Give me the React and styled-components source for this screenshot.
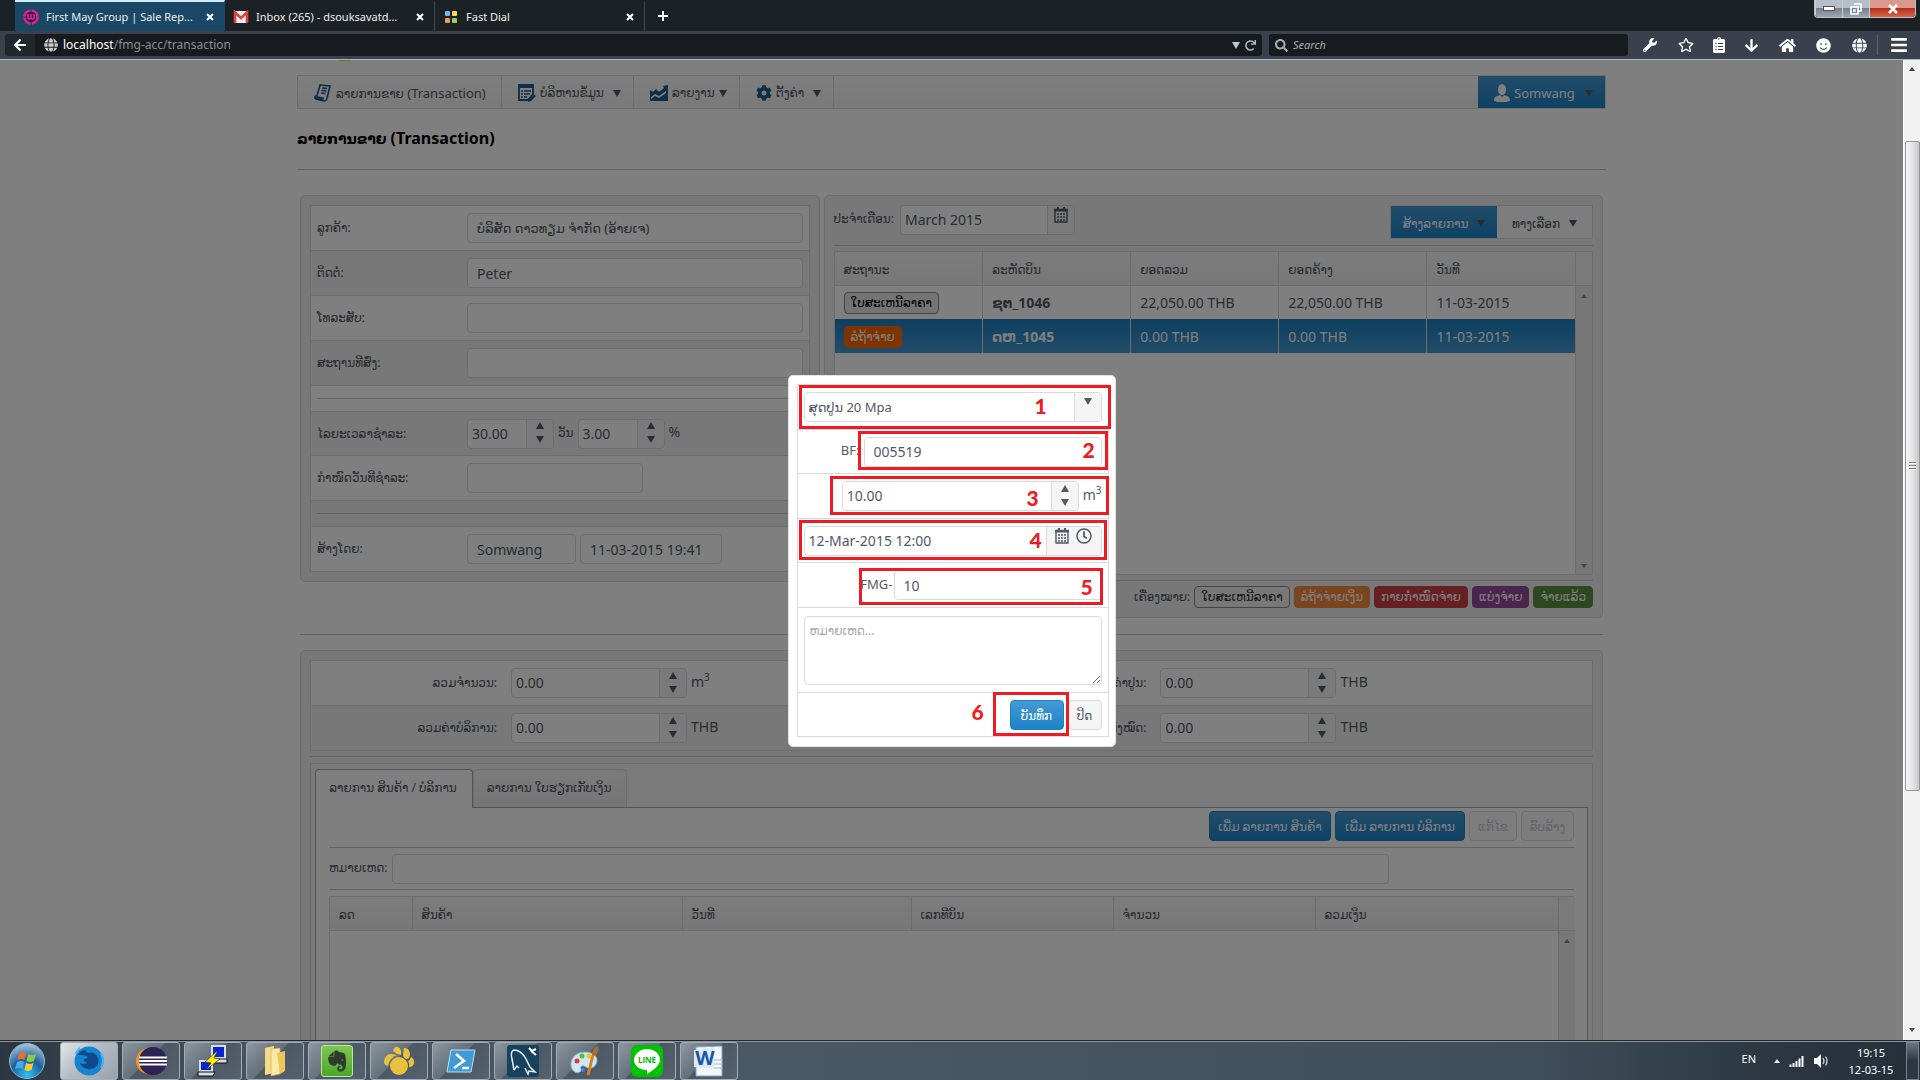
import React from "react";
import styled, { createGlobalStyle, css } from "styled-components";
import {
  FaWrench, FaRegStar, FaClipboardList, FaArrowDown, FaArrowLeft, FaHome, FaGlobe, FaBars,
  FaSmile, FaSearch, FaRedo, FaRegClock, FaCog, FaEvernote,
} from "react-icons/fa";

const sans = `"Noto Sans", "DejaVu Sans", sans-serif`;
const line = "#dadada";
const ink = "#515967";
const blueDown = "linear-gradient(#4499d4, #1c84c8)";
const blueUp = "linear-gradient(#1a7fc0, #449ad2)";

const Global = createGlobalStyle`
  * { box-sizing: border-box; }
  body { margin: 0; background: #fff; font: 14px/20px ${sans}; color: ${ink}; }
  button, input, select, textarea { font: inherit; color: inherit; margin: 0; }
  ul { list-style: none; margin: 0; padding: 0; }
  a { color: inherit; text-decoration: none; }
`;

const Screen = styled.div`
  height: 100vh;
  display: grid;
  grid-template-rows: 31px 29px minmax(0, 1fr) 40px;
  overflow: hidden;
`;

/* ---------- browser window ---------- */
const TabBar = styled.div`
  display: flex;
  padding-left: 15px;
  background: #1c2125;
  color: #eee;
  font: 11px/16px "Noto Sans", sans-serif;
`;
const BrowserTab = styled.div`
  width: 210px;
  display: flex;
  align-items: center;
  gap: 7px;
  padding: 0 10px 0 8px;
  border-top: 2px solid ${(p) => (p.$on ? "#cfeaff" : "transparent")};
  background: ${(p) => (p.$on ? "#1a4766" : "transparent")};
  border-right: 1px solid ${(p) => (p.$on ? "#1a4766" : "#42474b")};
  span { flex: 1; white-space: nowrap; }
`;
const BareButton = styled.button`
  display: flex;
  align-items: center;
  justify-content: center;
  padding: 0;
  border: 0;
  background: none;
  color: inherit;
`;
const NewTab = styled(BareButton)`
  width: 36px;
`;
const WindowButtons = styled.div`
  display: flex;
  height: 18px;
  margin: 0 4px 0 auto;
  border: 1px solid #b9c3cd;
  border-top: 0;
  border-radius: 0 0 4px 4px;
  overflow: hidden;
`;
const WindowButton = styled(BareButton)`
  width: ${(p) => (p.$close ? 46 : 27)}px;
  border-left: 1px solid #c6ced6;
  background: ${(p) => p.$close
    ? "linear-gradient(#d99a8e 0 45%, #b5301a 50%, #d8654a)"
    : "linear-gradient(#b6bec8 0 45%, #76838f 50%, #9aa7b3)"};
`;
const NavBar = styled.div`
  display: flex;
  align-items: center;
  padding-left: 5px;
  background: #3a414d;
  border-bottom: 1px solid #a6b8ca;
  color: #fff;
`;
const BackButton = styled(BareButton)`
  width: 30px;
  height: 22px;
  background: #22272d;
  border-radius: 3px 0 0 3px;
`;
const Field = styled.label`
  display: flex;
  align-items: center;
  gap: 5px;
  height: 22px;
  padding: 0 6px;
  background: #171b1f;
  border-radius: ${(p) => (p.$search ? "3px" : "0 3px 3px 0")};
  font-size: 12px;
  ${(p) => p.$search ? css`width: 359px; margin-left: 7px; color: #aaa; font-style: italic;` : css`flex: 1; padding-left: 9px;`}
`;
const Address = styled.a`
  flex: 1;
  font-size: 12px;
  color: #8b8f93;
  b { color: #fff; font-weight: 400; }
`;
const SearchInput = styled.input`
  flex: 1;
  border: 0;
  padding: 0;
  background: none;
  font-size: 11px;
  font-style: italic;
  &::placeholder { color: #aaa; opacity: 1; }
`;
const Tools = styled.div`
  display: flex;
  align-items: center;
  padding-left: 4px;
`;
const Tool = styled(BareButton)`
  width: ${(p) => p.$w || 36}px;
  height: 22px;
`;
const ToolLine = styled.i`
  width: 1px;
  height: 20px;
  background: #5c636e;
`;

const Viewport = styled.div`
  display: flex;
  min-height: 0;
`;
const Page = styled.main`
  position: relative;
  flex: 1;
  overflow: hidden;
`;
const Column = styled.div`
  max-width: 1309px;
  margin: 0 auto;
`;
const LogoEdge = styled.div`
  height: 15px;
  padding-left: 42px;
  &::before {
    content: "";
    display: block;
    width: 12px;
    height: 1px;
    background: #e6dc20;
  }
`;
const ScrollTrack = styled.div`
  width: 17px;
  display: flex;
  flex-direction: column;
  align-items: center;
  padding: 7px 0 8px;
  background: #f1f1f1;
  border-left: 1px solid #fff;
`;
const ScrollThumb = styled.div`
  width: 15px;
  height: 650px;
  margin: 70px 0 auto;
  display: flex;
  flex-direction: column;
  align-items: center;
  justify-content: center;
  gap: 1px;
  border: 1px solid #979797;
  border-radius: 2px;
  background: linear-gradient(90deg, #f5f5f5, #e4e4e6 50%, #c9c9cd);
  i { width: 7px; height: 2px; background: #777; border-bottom: 1px solid #fff; }
`;

/* ---------- page parts ---------- */
const Lao = styled.span`
  font-size: 12px;
`;
const MenuBar = styled.nav`
  display: flex;
  height: 34px;
  border: 1px solid ${line};
  background: linear-gradient(#fdfdfd, #f3f3f4);
`;
const MenuItem = styled.a`
  width: ${(p) => p.$w}px;
  display: flex;
  align-items: center;
  gap: 4px;
  padding: 2px 12px 0 16px;
  font-size: 13px;
  white-space: nowrap;
  border-right: 1px solid ${line};
  ${(p) => p.$user && css`
    margin-left: auto;
    border: 0;
    color: #fff;
    background: ${blueDown};
  `}
  svg:first-child { flex: none; }
`;
const Caret = styled.i`
  width: 0;
  margin-left: ${(p) => (p.$push ? "auto" : "0")};
  border: ${(p) => (p.$small ? 3 : 4)}px solid transparent;
  border-top: ${(p) => (p.$small ? 4 : 7)}px solid ${(p) => (p.$c || ink)};
  border-bottom: 0;
`;
const CaretUp = styled(Caret)`
  border-top: 0;
  border-bottom: ${(p) => (p.$small ? 4 : 7)}px solid ${(p) => (p.$c || ink)};
`;
const Heading = styled.h1`
  height: 60px;
  margin: 0;
  font-size: 16px;
  line-height: 58px;
  color: #000;
  small { font-size: 14px; }
`;
const Rule = styled.hr`
  height: 1px;
  margin: ${(p) => p.$m || "0"};
  border: 0;
  background: #c6c6c8;
`;
const Panels = styled.div`
  display: grid;
  grid-template-columns: minmax(0, 2fr) minmax(0, 3fr);
  gap: 4px;
  align-items: start;
  margin: 25px 3px 0;
`;
const Panel = styled.section`
  padding: 9px;
  border: 1px solid ${line};
  border-radius: 5px;
  background: #f1f1f2;
`;
const FormTable = styled.div`
  border: 1px solid ${line};
  border-bottom: 0;
  background: #fff;
`;
const FormRow = styled.div`
  display: flex;
  align-items: center;
  gap: ${(p) => (p.$tight ? 1 : 4)}px;
  height: ${(p) => p.$h || 45}px;
  padding: 0 6px;
  border-bottom: 1px solid ${line};
  background: ${(p) => (p.$alt ? "#f1f1f2" : "transparent")};
  justify-content: ${(p) => (p.$end ? "flex-end" : "flex-start")};
  hr { flex: 1; }
`;
const Label = styled.label`
  width: 146px;
  flex: none;
  font-size: 12px;
  white-space: nowrap;
`;
const box = css`
  height: 30px;
  border: 1px solid ${line};
  border-radius: 4px;
  background: #fff;
`;
const TextInput = styled.input`
  ${box}
  min-width: 0;
  padding: 0 9px;
  font-size: ${(p) => (p.$lao ? 13 : 14)}px;
  ${(p) => (p.$w ? `width: ${p.$w}px;` : "flex: 1;")}
`;
const Group = styled.span`
  ${box}
  display: flex;
  overflow: hidden;
  ${(p) => (p.$w ? `width: ${p.$w}px;` : "flex: 1;")}
  input, select {
    flex: 1;
    min-width: 0;
    padding: 0 4px;
    border: 0;
    background: none;
    appearance: none;
    outline: 0;
  }
  select { font-size: 13px; }
`;
const Side = styled.span`
  width: ${(p) => p.$w || 27}px;
  flex: none;
  display: flex;
  flex-direction: ${(p) => (p.$row ? "row" : "column")};
  align-items: center;
  justify-content: ${(p) => (p.$top ? "flex-start" : "center")};
  gap: 7px;
  padding: ${(p) => (p.$top ? "5px 0 0" : p.$row ? "0 0 10px" : "0 0 2px")};
  border-left: 1px solid ${line};
  background: #f5f5f6;
  button { height: auto; }
`;
const Unit = styled.span`
  padding-bottom: 3px;
  sup { font-size: 10px; line-height: 0; }
`;
const Prefix = styled.label`
  padding-bottom: 3px;
  font-size: 13px;
`;
const Bar = styled.div`
  display: flex;
  gap: ${(p) => (p.$wide ? 6 : 4)}px;
  align-items: flex-start;
  justify-content: ${(p) => (p.$end ? "flex-end" : "flex-start")};
`;
const BarLabel = styled.label`
  font-size: 12px;
  line-height: ${(p) => p.$lh || 28}px;
  white-space: nowrap;
`;
const DropButtons = styled.div`
  display: flex;
  height: 34px;
  margin-left: auto;
  border: 1px solid ${line};
`;
const DropButton = styled(BareButton)`
  width: ${(p) => p.$w}px;
  gap: 9px;
  padding-top: 3px;
  font-size: 12px;
  background: ${(p) => (p.$primary ? blueDown : "#fafafa")};
  color: ${(p) => (p.$primary ? "#fff" : ink)};
`;
const GridBox = styled.div`
  display: flex;
  height: ${(p) => p.$h}px;
  border: 1px solid ${line};
  background: #fff;
`;
const DataTable = styled.table`
  flex: 1;
  align-self: flex-start;
  width: 100%;
  border-collapse: collapse;
  table-layout: fixed;
  th, td { padding: 0 9px; text-align: left; white-space: nowrap; border-left: 1px solid ${line}; }
  th:first-child, td:first-child { border-left: 0; }
  th { height: 33px; padding-top: 3px; font-size: 12px; font-weight: 400; background: linear-gradient(#f8f8f8, #f0f0f1); border-bottom: 1px solid ${line}; }
  td { height: 34px; padding-top: 2px; }
`;
const Tr = styled.tr`
  ${(p) => p.$on && css`color: #fff; background: ${blueUp};`}
`;
const MiniScroll = styled.div`
  width: 17px;
  flex: none;
  display: flex;
  flex-direction: column;
  align-items: center;
  padding-bottom: 6px;
  background: #eee;
  border-left: 1px solid ${line};
  &::before {
    content: "";
    align-self: stretch;
    height: 33px;
    margin-bottom: 8px;
    background: #f4f4f5;
    border-bottom: 1px solid ${line};
  }
  i:last-child { margin-top: auto; }
`;
const Tag = styled.span`
  display: inline-block;
  padding: 0 6px;
  border: 1px solid ${(p) => p.$line || p.$bg};
  border-radius: 4px;
  font-size: 12px;
  line-height: 20px;
  color: ${(p) => p.$c || "#fff"};
  background: ${(p) => p.$bg};
  white-space: nowrap;
`;
const Totals = styled.div`
  display: grid;
  grid-template-columns: minmax(0, 650fr) minmax(0, 632fr);
  height: 45px;
  align-items: center;
  border-bottom: 1px solid ${line};
  background: ${(p) => (p.$alt ? "#f1f1f2" : "transparent")};
`;
const TotalCell = styled.div`
  display: flex;
  align-items: center;
  gap: 4px;
`;
const TotalLabel = styled(Label)`
  width: 186px;
  margin-right: 10px;
  text-align: right;
`;
const TabBox = styled.div`
  height: 420px;
  padding: 5px 4px 0;
  border: 1px solid ${line};
  background: #f4f4f5;
`;
const Tabs = styled.div`
  display: flex;
`;
const Tab = styled.button`
  width: ${(p) => p.$w}px;
  height: 38px;
  padding: 0 2px 2px 0;
  font-size: 12px;
  white-space: nowrap;
  border: 1px solid ${line};
  border-bottom: 0;
  border-radius: 4px 4px 0 0;
  background: linear-gradient(#f6f6f6, #ececee);
  ${(p) => p.$on && css`
    position: relative;
    border: 1px solid #a5a8b5;
    border-bottom: 0;
    background: #fff;
    height: 39px;
    margin-bottom: -1px;
  `}
`;
const TabPane = styled.div`
  height: 380px;
  padding: 3px 13px 0;
  border: 1px solid #a5a8b5;
  background: #fff;
`;
const Button = styled.button`
  width: ${(p) => p.$w}px;
  height: 30px;
  padding: 2px 0 0;
  border: 1px solid ${(p) => (p.$primary ? "#1984c8" : line)};
  border-radius: 4px;
  font-size: 12px;
  white-space: nowrap;
  color: ${(p) => (p.$primary ? "#fff" : ink)};
  background: ${(p) => (p.$primary ? blueDown : "#f5f5f5")};
  &:disabled { color: #c9c9cf; background: #fbfbfb; }
`;
const BottomWrap = styled(Panel)`
  margin: 0 3px;
`;

/* ---------- dialog ---------- */
const Overlay = styled.div`
  position: absolute;
  inset: 0;
  z-index: 2;
  display: flex;
  justify-content: center;
  align-items: flex-start;
  padding-top: 315px;
  background: rgba(0, 0, 0, 0.5);
`;
const Dialog = styled.form`
  position: relative;
  width: 328px;
  padding: 8px 6px 9px 8px;
  border: 1px solid #e4e4e8;
  border-radius: 5px;
  background: #fff;
`;
const Note = styled.textarea`
  flex: 1;
  height: 69px;
  padding: 4px 5px;
  border: 1px solid ${line};
  border-radius: 4px;
  font-size: 12px;
  &::placeholder { color: #a5a7ad; opacity: 1; }
`;
const Mark = styled.div`
  position: absolute;
  pointer-events: none;
  left: ${(p) => p.$x}px;
  top: ${(p) => p.$y}px;
  width: ${(p) => p.$w}px;
  height: ${(p) => p.$h}px;
  border: 3px solid #ed1c24;
`;
const MarkNumber = styled.b`
  position: absolute;
  pointer-events: none;
  left: ${(p) => p.$x}px;
  top: ${(p) => p.$y}px;
  width: 12px;
  font: 900 21px/22px Lato, sans-serif;
  text-align: center;
  color: #ed1c24;
`;

/* ---------- taskbar ---------- */
const TaskBar = styled.footer`
  display: flex;
  align-items: center;
  padding: 0 1px 0 7px;
  border-top: 1px solid #20262c;
  box-shadow: inset 0 1px 0 #8a949e;
  background: linear-gradient(90deg, #2b3641, #45535f 12%, #4a5966 40%, #3f4e5b 80%, #2c3742 92%, #252f39);
  color: #fff;
`;
const Orb = styled(BareButton)`
  width: 40px;
  margin-right: 13px;
`;
const Apps = styled.div`
  display: flex;
  gap: 4px;
`;
const AppButton = styled(BareButton)`
  width: 58px;
  height: 38px;
  border: 1px solid #a3adb5;
  border-radius: 3px;
  background: ${(p) => p.$on
    ? "linear-gradient(135deg, #e3e6e8, #b4bcc3 45%, #98a2ab)"
    : "linear-gradient(135deg, #8d979f, #64707a 45%, #4c5863 46%, #55626d)"};
`;
const Tray = styled.div`
  display: flex;
  align-items: center;
  gap: 9px;
  margin-left: auto;
  font: 12px/17px "Noto Sans", sans-serif;
`;
const Lang = styled.span`
  padding: 0 9px 4px 0;
  font-size: 11px;
`;
const Clock = styled.div`
  width: 64px;
  font-size: 11px;
  text-align: center;
`;
const Peek = styled(BareButton)`
  width: 13px;
  height: 38px;
  margin-left: 3px;
  border: 1px solid #77828c;
  background: linear-gradient(#6b757e, #2c3640 50%);
`;

/* ---------- drawings ---------- */
const Close = () => (
  <svg width="8" height="8" viewBox="0 0 8 8"><path d="M1 1l6 6M7 1L1 7" stroke="#fff" strokeWidth="2" /></svg>
);
const Calendar = () => (
  <svg width="14" height="16" viewBox="0 0 14 16">
    <path d="M1 2.500h12v12.500H1z" fill="none" stroke="#515967" strokeWidth="1.400" />
    <path d="M0 2h14v2.500H0zM3 0h2v3H3zM9 0h2v3H9z" fill="#515967" />
    <path d="M3 7h8M3 10h8M3 13h8" stroke="#515967" strokeWidth="1.600" strokeDasharray="2 1" />
  </svg>
);
const Scroll = () => (
  <svg width="18" height="18" viewBox="0 0 18 18">
    <path d="M6 1l10 1-3 12c0 2-2 3-3 3L2 15c-2-1-1-3 0-3h1z" fill="#fff" stroke="#1c5a8c" strokeWidth="1.600" />
    <path d="M2 12l8 1.500L9 17l-7-1.500q-1.500-2 0-3.500z" fill="#1c5a8c" />
    <path d="M8 4l5 .5M7.500 6.500l5 .5M7 9l4.500.5" stroke="#1c5a8c" strokeWidth="1.400" fill="none" />
  </svg>
);
const Register = () => (
  <svg width="18" height="18" viewBox="0 0 18 18">
    <path d="M1 1h14v9l-5 6H1z" fill="#fff" stroke="#1c5a8c" strokeWidth="1.800" />
    <path d="M1 2.500h14" stroke="#1c5a8c" strokeWidth="3" />
    <path d="M3 7h2M6 7h7M3 10h2M6 10h6M3 13h2M6 13h3" stroke="#1c5a8c" strokeWidth="1.300" />
    <path d="M10 16l5-6 3 2-5 5-3 1z" fill="#1c5a8c" />
  </svg>
);
const Chart = () => (
  <svg width="18" height="18" viewBox="0 0 18 18">
    <path d="M0 17V6l3 2 3-3 3 3 5-4-1-2 5-1v16z" fill="#1c5a8c" />
    <path d="M1 13l4-3 4 2 7-5v2l-7 5-4-2-4 3z" fill="#fff" />
  </svg>
);
const Person = () => (
  <svg width="16" height="18" viewBox="0 0 16 18">
    <ellipse cx="8" cy="5.500" rx="4" ry="5.500" fill="#fff" />
    <path d="M0 16c0-3 3-4 6-5l2 2 2-2c3 1 6 2 6 5 0 3-16 3-16 0z" fill="#fff" />
  </svg>
);
const Fav = ({ kind }) => (
  <svg width="16" height="16" viewBox="0 0 16 16">
    {kind === "fmg" && <>
      <circle cx="8" cy="8" r="6.500" fill="#2b2350" stroke="#e5218c" strokeWidth="2.600" strokeDasharray="9 1.200" />
      <path d="M5 5v4q1.500 2 3 0q1.500 2 3 0V5M8 5v4" stroke="#e5218c" strokeWidth="1.600" fill="none" />
    </>}
    {kind === "mail" && <>
      <path d="M1 2h14v12H1z" fill="#eee" />
      <path d="M2 14V3.500l6 5.500 6-5.500V14" stroke="#db4437" strokeWidth="2.600" fill="none" />
    </>}
    {kind === "dial" && <>
      <rect x="2" y="2" width="5" height="5" rx="1" fill="#72b8e8" /><rect x="9" y="2" width="5" height="5" rx="1" fill="#f7d94c" />
      <rect x="2" y="9" width="5" height="5" rx="1" fill="#f3984a" /><rect x="9" y="9" width="5" height="5" rx="1" fill="#9bc866" />
    </>}
  </svg>
);
const Flag = () => (
  <svg width="38" height="38" viewBox="0 0 38 38">
    <defs><radialGradient id="orb" cx=".5" cy=".9" r=".9"><stop offset="0" stopColor="#2fc4f5" /><stop offset=".5" stopColor="#1b5f9c" /><stop offset="1" stopColor="#a9c6dc" /></radialGradient></defs>
    <circle cx="19" cy="19" r="17.500" fill="url(#orb)" stroke="#8fb4cc" />
    <path d="M11 12q4-3 7-1l-1.500 7q-3-2-7 0z" fill="#f26a2c" /><path d="M20 12q4 2 8 0l-2 7q-4 2-7.500 0z" fill="#8ccc3c" />
    <path d="M9 20q4-2 7 0l-1.500 7q-3-2-7.500 0z" fill="#4ba8e8" /><path d="M18 21q4 2 7.500 0l-2 7q-3.500 2-7 0z" fill="#fcc92e" />
  </svg>
);
const art = {
  Firefox: <>
    <circle cx="16" cy="16" r="14.500" fill="#1583d0" />
    <path d="M5 10q2-5 8-5-1 2 2 3 6-2 9 3 3 5 0 10-4 4-9 3-7-1-8-6 4 2 7 0-4-2-3-4 3 0 4-2-3-2-6-2-2 0-4 0z" fill="#0d4a8c" />
    <path d="M28 8q4 8 0 15M3 9q1-4 4-6" stroke="#44b4f2" strokeWidth="2" fill="none" />
  </>,
  Eclipse: <>
    <circle cx="14" cy="16" r="13" fill="#f7941e" /><circle cx="18" cy="16" r="14" fill="#2c2255" />
    <path d="M4 12.500h28M4 16h28M4 19.500h28" stroke="#fff" strokeWidth="1.800" />
  </>,
  PuTTY: <>
    <path d="M15 1h13v12H15zM3 16h12v10H3z" fill="#0a22d8" stroke="#ddd" strokeWidth="2" />
    <path d="M14 14h16v4H16zM1 27h17l-2 4H1z" fill="#ddd" stroke="#111" />
    <path d="M21 5L8 17l6 1-5 7 14-11-6-1z" fill="#ffec1a" stroke="#222" strokeWidth=".6" />
  </>,
  Folders: <>
    <path d="M6 3l9-2v27l-9 2z" fill="#f6dc84" /><path d="M12 4l9-1v26l-9 2z" fill="#fbe9a8" stroke="#cfa84a" strokeWidth=".6" /><path d="M18 8l8-2v20l-5 3z" fill="#ecc65c" />
  </>,
  Paint: <>
    <path d="M16 7C6 7 1 14 2 21c1 6 6 8 9 6s-1-5 2-6 5 4 10 2c8-4 7-16-7-16z" fill="#cfe6f5" stroke="#7fa8c4" />
    <circle cx="8" cy="16" r="2.500" fill="#e33" /><circle cx="13" cy="11" r="2.500" fill="#5b3" /><circle cx="20" cy="11" r="2.500" fill="#f5c21c" /><circle cx="14" cy="25" r="2" fill="#38d" />
    <path d="M19 30l5-20" stroke="#d88020" strokeWidth="3" /><path d="M23 10q0-7 6-9 2 5-3 10z" fill="#a86a3c" />
  </>,
  Bear: <>
    <circle cx="16" cy="21" r="9" fill="#e9c13c" />
    <path d="M1 17Q2 9 8 9l6 1q-8 3-9 11-4-1-4-4zM10 6q1-5 5-4 4 2 3 8-5-1-8-4zM21 3q5-1 6 6 0 4-3 5-4-1-4-4zM28 12q4 2 3 7-2 4-5 3 1-3-1-6 2-1 3-4z" fill="#e9c13c" />
  </>,
  PowerShell: <>
    <path d="M6 5h24l-4 22H2z" fill="#3f9ad6" stroke="#bde0f5" /><path d="M11 9l8 7-10 7M17 23h7" stroke="#fff" strokeWidth="2.600" fill="none" />
  </>,
  MySQL: <>
    <rect width="32" height="32" rx="3" fill="#14425f" />
    <path d="M7 25q-1-6-2-11-2-8 2-9 7 0 12 9l4 8 5 5-6-1-1 3-3-6" stroke="#e5edf2" strokeWidth="1.500" fill="none" />
    <path d="M7 25l3-4 2 2" stroke="#e5edf2" strokeWidth="1.300" fill="none" />
    <path d="M22 3l3 3 4-2M24 6l5 4" stroke="#fff" strokeWidth="2" fill="none" />
  </>,
};
const AppIcon = ({ name }) => <svg width="32" height="32" viewBox="0 0 32 32">{art[name]}</svg>;
const Evernote = styled.span`
  display: flex;
  padding: 3px;
  border-radius: 3px;
  border: 1px solid #b6e89a;
  color: #2f3a33;
  background: linear-gradient(#7cc94e, #4ba62a);
`;
const LineIcon = () => (
  <svg width="32" height="32" viewBox="0 0 32 32">
    <rect width="32" height="32" rx="6" fill="#00c300" />
    <path d="M16 4c8 0 13 5 13 11 0 5-5 9-13 14v-4C8 25 3 20 3 15S8 4 16 4z" fill="#fff" />
    <text x="16" y="18" textAnchor="middle" fontFamily="Open Sans, sans-serif" fontWeight="700" fontSize="8" fill="#00b900">LINE</text>
  </svg>
);
const WordIcon = () => (
  <svg width="32" height="32" viewBox="0 0 32 32">
    <path d="M3 2l26-1v30H3z" fill="#f4f8fc" stroke="#7fa3d4" /><path d="M19 15h11M20 19h10M21 23h9" stroke="#9db4cf" />
    <path d="M1 5l20-3v22L1 22z" fill="#dfeaf8" />
    <text x="12" y="20" textAnchor="middle" fontFamily="Open Sans, sans-serif" fontWeight="700" fontSize="20" fill="#1a55a8">W</text>
  </svg>
);
const Signal = () => (
  <svg width="16" height="12" viewBox="0 0 16 12"><path d="M1.500 12V9.500M4.500 12V8M7.500 12V6M10.500 12V3.500M13.500 12V1" stroke="#fff" strokeWidth="2" /></svg>
);
const Speaker = () => (
  <svg width="16" height="14" viewBox="0 0 16 14"><path d="M0 4h3l4-4v14l-4-4H0z" fill="#fff" /><path d="M9 4q2 3 0 6M11.500 2.500q3 4.500 0 9" stroke="#cdd3d8" strokeWidth="1.300" fill="none" /></svg>
);

const Spin = ({ id, value, w, label }) => (
  <Group $w={w}>
    <input id={id} aria-label={label} defaultValue={value} />
    <Side>
      <BareButton type="button" aria-label="+"><CaretUp /></BareButton>
      <BareButton type="button" aria-label="-"><Caret /></BareButton>
    </Side>
  </Group>
);
const ScrollEnds = () => (
  <MiniScroll><CaretUp $small $c="#888" /><Caret $small $c="#888" /></MiniScroll>
);

const bills = [
  { tag: "ໃບສະເຫນີລາຄາ", plain: true, code: "ຊຕ_1046", sum: "22,050.00 THB", due: "22,050.00 THB", date: "11-03-2015" },
  { tag: "ລໍຖ້າຈ່າຍ", code: "ດຫ_1045", sum: "0.00 THB", due: "0.00 THB", date: "11-03-2015", on: true },
];
const legend = [["ລໍຖ້າຈ່າຍເງິນ", "#f58a3c"], ["ກາຍກໍາໜົດຈ່າຍ", "#cc3f44"], ["ແບ່ງຈ່າຍ", "#964b9c"], ["ຈ່າຍແລ້ວ", "#5a8f3c"]];
const totals = [
  [["sumQty", "ລວມຈໍານວນ:", <>m<sup>3</sup></>], ["sumCement", "ລວມຄ່າປູນ:", "THB"]],
  [["sumService", "ລວມຄ່າບໍລິການ:", "THB"], ["sumAll", "ລວມທັງໝົດ:", "THB"]],
];
const itemColumns = [["ລດ", 82], ["ສິນຄ້າ", 270], ["ວັນທີ", 229], ["ເລກທີບິນ", 202], ["ຈໍານວນ", 202], ["ລວມເງິນ", 243]];
const marks = [[10, 9, 312, 44], [69, 55, 250, 39], [41, 100, 279, 39], [10, 144, 308, 40], [70, 192, 244, 37], [204, 316, 76, 44]];
const numbers = [[246, 19], [294, 63], [238, 111], [241, 153], [292, 200], [183, 325]];

const BottomPanel = () => (
  <BottomWrap>
    <FormTable>
      {totals.map((row, i) => (
        <Totals key={i} $alt={i === 1}>
          {row.map(([id, text, unit]) => (
            <TotalCell key={id}><TotalLabel htmlFor={id}>{text}</TotalLabel><Spin id={id} value="0.00" w={176} /><Unit>{unit}</Unit></TotalCell>
          ))}
        </Totals>
      ))}
    </FormTable>
    <Rule $m="5px 0 6px" />
    <TabBox>
      <Tabs>
        <Tab $on $w={158}>ລາຍການ ສິນຄ້າ / ບໍລິການ</Tab>
        <Tab $w={154}>ລາຍການ ໃບຮຽກເກັບເງິນ</Tab>
      </Tabs>
      <TabPane>
        <Bar $end>
          <Button $primary $w={122}>ເພີ່ມ ລາຍການ ສິນຄ້າ</Button>
          <Button $primary $w={130}>ເພີ່ມ ລາຍການ ບໍລິການ</Button>
          <Button $w={48} disabled>ແກ້ໄຂ</Button>
          <Button $w={53} disabled>ລົບລ້າງ</Button>
        </Bar>
        <Rule $m="6px 0" />
        <Bar><BarLabel htmlFor="remark">ຫມາຍເຫດ:</BarLabel><TextInput id="remark" $w={997} /></Bar>
        <Rule $m="5px 0 6px" />
        <GridBox $h={300}>
          <DataTable>
            <colgroup>{itemColumns.map(([t, w]) => <col key={t} width={w} />)}</colgroup>
            <thead><tr>{itemColumns.map(([t]) => <th key={t}>{t}</th>)}</tr></thead>
          </DataTable>
          <ScrollEnds />
        </GridBox>
      </TabPane>
    </TabBox>
  </BottomWrap>
);

export default function App() {
  return (
    <Screen>
      <Global />
      <TabBar>
        <BrowserTab $on><Fav kind="fmg" /><span>First May Group | Sale Rep...</span><BareButton aria-label="Close"><Close /></BareButton></BrowserTab>
        <BrowserTab><Fav kind="mail" /><span>Inbox (265) - dsouksavatd...</span><BareButton aria-label="Close"><Close /></BareButton></BrowserTab>
        <BrowserTab><Fav kind="dial" /><span>Fast Dial</span><BareButton aria-label="Close"><Close /></BareButton></BrowserTab>
        <NewTab aria-label="New tab"><svg width="10" height="10"><path d="M5 0v10M0 5h10" stroke="#fff" strokeWidth="2" /></svg></NewTab>
        <WindowButtons>
          <WindowButton aria-label="Minimize"><svg width="12" height="6"><rect x=".5" y=".5" width="11" height="4" fill="#fff" stroke="#555" /></svg></WindowButton>
          <WindowButton aria-label="Restore"><svg width="12" height="12"><path d="M4 1h7v7H8M1 4h7v7H1zM4 7h1v1H4z" fill="none" stroke="#fff" strokeWidth="1.600" /></svg></WindowButton>
          <WindowButton $close aria-label="Close window"><svg width="12" height="10"><path d="M2 1l8 8M10 1L2 9" stroke="#fff" strokeWidth="2.600" /></svg></WindowButton>
        </WindowButtons>
      </TabBar>
      <NavBar>
        <BackButton aria-label="Back"><FaArrowLeft size={14} /></BackButton>
        <Field as="div">
          <FaGlobe size={14} color="#c8c8c8" />
          <Address href="#"><b>localhost</b>/fmg-acc/transaction</Address>
          <Caret $c="#c0c8d0" />
          <FaRedo size={11} color="#a8b8c8" />
        </Field>
        <Field $search><FaSearch size={13} /><SearchInput placeholder="Search" /></Field>
        <Tools>
          <Tool aria-label="Developer"><FaWrench size={14} /></Tool>
          <Tool aria-label="Bookmark"><FaRegStar size={16} /></Tool>
          <Tool $w={30} aria-label="Bookmarks list"><FaClipboardList size={16} /></Tool>
          <Tool $w={35} aria-label="Downloads"><FaArrowDown size={15} /></Tool>
          <Tool aria-label="Home"><FaHome size={17} /></Tool>
          <Tool aria-label="Chat"><FaSmile size={15} /></Tool>
          <Tool aria-label="Network"><FaGlobe size={15} /></Tool>
          <ToolLine />
          <Tool $w={42} aria-label="Menu"><FaBars size={18} /></Tool>
        </Tools>
      </NavBar>

      <Viewport>
        <Page>
          <Column>
            <LogoEdge />
            <MenuBar>
              <MenuItem href="#" $w={204}><Scroll /><span><Lao>ລາຍການຂາຍ</Lao> (Transaction)</span></MenuItem>
              <MenuItem href="#" $w={132}><Register /><Lao>ບໍລິຫານຂໍ້ມູນ</Lao><Caret $push /></MenuItem>
              <MenuItem href="#" $w={106}><Chart /><Lao>ລາຍງານ</Lao><Caret $push /></MenuItem>
              <MenuItem href="#" $w={94}><FaCog size={16} color="#1c5a8c" /><Lao>ຕັ້ງຄ່າ</Lao><Caret $push /></MenuItem>
              <MenuItem href="#" $w={127} $user><Person />Somwang<Caret $push /></MenuItem>
            </MenuBar>
            <Heading><small>ລາຍການຂາຍ</small> (Transaction)</Heading>
            <Rule />

            <Panels>
              <Panel>
                <FormTable>
                  <FormRow><Label htmlFor="customer">ລູກຄ້າ:</Label><TextInput id="customer" $lao defaultValue="ບໍລິສັດ ດາວທຽມ ຈໍາກັດ (ອ້າຍເຈ)" /></FormRow>
                  <FormRow $alt><Label htmlFor="contact">ຕິດຕໍ່:</Label><TextInput id="contact" defaultValue="Peter" /></FormRow>
                  <FormRow><Label htmlFor="phone">ໂທລະສັບ:</Label><TextInput id="phone" /></FormRow>
                  <FormRow $alt><Label htmlFor="place">ສະຖານທີສົ່ງ:</Label><TextInput id="place" /></FormRow>
                  <FormRow $h={26}><Rule /></FormRow>
                  <FormRow $alt $h={44}>
                    <Label htmlFor="days">ໄລຍະເວລາຊໍາລະ:</Label>
                    <Spin id="days" value="30.00" w={87} /><Unit><Lao>ວັນ</Lao></Unit>
                    <Spin label="%" value="3.00" w={87} /><Unit>%</Unit>
                  </FormRow>
                  <FormRow><Label htmlFor="due">ກໍາໜົດວັນທີຊໍາລະ:</Label><TextInput id="due" $w={176} /></FormRow>
                  <FormRow $alt $h={26}><Rule /></FormRow>
                  <FormRow><Label htmlFor="by">ສ້າງໂດຍ:</Label><TextInput id="by" $w={109} defaultValue="Somwang" /><TextInput aria-label="ວັນທີ" $w={142} defaultValue="11-03-2015 19:41" /></FormRow>
                </FormTable>
              </Panel>

              <Panel>
                <Bar $wide>
                  <BarLabel htmlFor="month">ປະຈໍາເດືອນ:</BarLabel>
                  <Group $w={175}><input id="month" defaultValue="March 2015" /><Side $row><BareButton aria-label="ປະຈໍາເດືອນ"><Calendar /></BareButton></Side></Group>
                  <DropButtons>
                    <DropButton $w={106} $primary>ສ້າງລາຍການ<Caret /></DropButton>
                    <DropButton $w={95}>ທາງເລືອກ<Caret /></DropButton>
                  </DropButtons>
                </Bar>
                <Rule $m="6px 0 5px" />
                <GridBox $h={324}>
                  <DataTable>
                    <thead><tr><th>ສະຖານະ</th><th>ລະຫັດບິນ</th><th>ຍອດລວມ</th><th>ຍອດຄ້າງ</th><th>ວັນທີ</th></tr></thead>
                    <tbody>
                      {bills.map((b) => (
                        <Tr key={b.code} $on={b.on}>
                          <td>{b.plain ? <Tag $bg="#e8e8e8" $line="#888" $c="#000">{b.tag}</Tag> : <Tag $bg="#ff6600">{b.tag}</Tag>}</td>
                          <td><b>{b.code}</b></td><td>{b.sum}</td><td>{b.due}</td><td>{b.date}</td>
                        </Tr>
                      ))}
                    </tbody>
                  </DataTable>
                  <ScrollEnds />
                </GridBox>
                <Rule $m="5px 0" />
                <Bar $end>
                  <BarLabel as="span" $lh={22}>ເຄື່ອງໝາຍ:</BarLabel>
                  <Tag $bg="#f1f1f2" $line="#888" $c="#333">ໃບສະເຫນີລາຄາ</Tag>
                  {legend.map(([t, c]) => <Tag key={t} $bg={c}>{t}</Tag>)}
                </Bar>
              </Panel>
            </Panels>

            <Rule $m="16px 3px 15px" />
            <BottomPanel />
          </Column>

          <Overlay>
            <Dialog onSubmit={(e) => e.preventDefault()}>
              <FormTable>
                <FormRow $end>
                  <Group><select aria-label="ສິນຄ້າ"><option>ສຸດປູນ 20 Mpa</option></select><Side $top><Caret /></Side></Group>
                </FormRow>
                <FormRow $h={44} $end><Prefix htmlFor="bf">BF:</Prefix><TextInput id="bf" $w={238} defaultValue="005519" /></FormRow>
                <FormRow $end><Spin label="m3" value="10.00" w={237} /><Unit>m<sup>3</sup></Unit></FormRow>
                <FormRow $h={44} $end>
                  <Group>
                    <input aria-label="ວັນທີ" defaultValue="12-Mar-2015 12:00" />
                    <Side $row $w={55}>
                      <BareButton type="button" aria-label="ວັນທີ"><Calendar /></BareButton>
                      <BareButton type="button" aria-label="ເວລາ"><FaRegClock size={16} /></BareButton>
                    </Side>
                  </Group>
                </FormRow>
                <FormRow $end $tight><Prefix htmlFor="fmg">FMG-</Prefix><TextInput id="fmg" $w={208} defaultValue="10" /></FormRow>
                <FormRow $h={85}><Note aria-label="ຫມາຍເຫດ" placeholder="ຫມາຍເຫດ..." /></FormRow>
                <FormRow $h={44} $end><Button $w={54} $primary>ບັນທຶກ</Button><Button type="button" $w={34}>ປິດ</Button></FormRow>
              </FormTable>
              {marks.map(([x, y, w, h]) => <Mark key={y} $x={x} $y={y} $w={w} $h={h} />)}
              {numbers.map(([x, y], i) => <MarkNumber key={y} $x={x} $y={y}>{i + 1}</MarkNumber>)}
            </Dialog>
          </Overlay>
        </Page>
        <ScrollTrack><CaretUp $small $c="#444" /><ScrollThumb><i /><i /><i /></ScrollThumb><Caret $small $c="#444" /></ScrollTrack>
      </Viewport>

      <TaskBar>
        <Orb aria-label="Start"><Flag /></Orb>
        <Apps>
          <AppButton $on aria-label="Firefox"><AppIcon name="Firefox" /></AppButton>
          <AppButton aria-label="Eclipse"><AppIcon name="Eclipse" /></AppButton>
          <AppButton aria-label="PuTTY"><AppIcon name="PuTTY" /></AppButton>
          <AppButton aria-label="Explorer"><AppIcon name="Folders" /></AppButton>
          <AppButton aria-label="Evernote"><Evernote><FaEvernote size={24} /></Evernote></AppButton>
          <AppButton aria-label="Bear"><AppIcon name="Bear" /></AppButton>
          <AppButton aria-label="PowerShell"><AppIcon name="PowerShell" /></AppButton>
          <AppButton aria-label="MySQL"><AppIcon name="MySQL" /></AppButton>
          <AppButton aria-label="Paint"><AppIcon name="Paint" /></AppButton>
          <AppButton aria-label="LINE"><LineIcon /></AppButton>
          <AppButton aria-label="Word"><WordIcon /></AppButton>
        </Apps>
        <Tray>
          <Lang>EN</Lang><CaretUp $small $c="#e8edf2" /><Signal /><Speaker />
          <Clock>19:15<br />12-03-15</Clock>
        </Tray>
        <Peek aria-label="Show desktop" />
      </TaskBar>
    </Screen>
  );
}
